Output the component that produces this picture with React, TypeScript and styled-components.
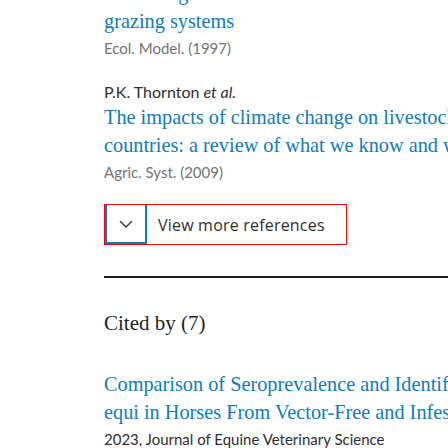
import styled, { createGlobalStyle } from 'styled-components'

const GlobalStyle = createGlobalStyle`
  body {
    margin: 0;
    background: #fff;
  }
`

const Page = styled.div`
  height: 448px;
  overflow: hidden;
  padding-left: 104px;
`

// the page is scrolled, so the first reference starts above the top edge
const RefList = styled.ul<{ $offset?: number }>`
  display: flex;
  flex-direction: column;
  gap: 19px;
  list-style: none;
  margin: ${(p) => p.$offset ?? 0}px 0 0;
  padding: 0;
`

const RefItem = styled.li``

const Authors = styled.div`
  font-family: Lato, sans-serif;
  font-size: 16px;
  line-height: 23px;
  color: #2e2e2e;
  white-space: nowrap;

  em {
    font-style: italic;
  }
`

const Title = styled.a`
  display: block;
  font-family: 'Liberation Serif', serif;
  font-size: 20.3px;
  line-height: 28px;
  color: #0c7dbb;
  text-decoration: none;
  white-space: nowrap;
`

const Source = styled.div<{ $dark?: boolean }>`
  font-family: Lato, sans-serif;
  font-size: 15px;
  line-height: 26px;
  color: ${(p) => (p.$dark ? '#2e2e2e' : '#737373')};
  white-space: nowrap;
`

const ViewMore = styled.button`
  display: flex;
  align-items: stretch;
  width: 243px;
  height: 41px;
  padding: 0;
  margin: 19px 0 0;
  border: 1px solid #ff0000;
  background: #fff;
  cursor: pointer;
`

const IconBox = styled.span`
  display: flex;
  align-items: center;
  justify-content: center;
  width: 38px;
  border: 2px solid #0c7dbb;
  border-top: none;
  color: #2e2e2e;
`

const Label = styled.span`
  display: flex;
  align-items: center;
  padding-left: 11px;
  font-family: 'Open Sans', sans-serif;
  font-size: 16px;
  letter-spacing: 0.2px;
  color: #2e2e2e;
`

const Divider = styled.hr`
  height: 2px;
  margin: 31px 0 0;
  border: none;
  background: #1f1f1f;
`

const Heading = styled.h2`
  margin: 33px 0 0;
  font-family: 'Liberation Serif', serif;
  font-size: 21px;
  font-weight: normal;
  line-height: 24px;
  color: #1f1f1f;
`

const Chevron = () => (
  <svg width="14" height="8" viewBox="0 0 14 8" fill="none">
    <path d="M1 1l6 6 6-6" stroke="currentColor" strokeWidth="1.4" />
  </svg>
)

const App = () => (
  <>
    <GlobalStyle />
    <Page>
      <RefList $offset={-21}>
        <RefItem>
          <Title href="#">
            Modelling the effect of habitat on the cattle tick (Boophilus sp.) in
            <br />
            grazing systems
          </Title>
          <Source>Ecol. Model. (1997)</Source>
        </RefItem>
        <RefItem>
          <Authors>
            P.K. Thornton <em>et al.</em>
          </Authors>
          <Title href="#">
            The impacts of climate change on livestock and livestock systems in developing
            <br />
            countries: a review of what we know and what we need to know
          </Title>
          <Source>Agric. Syst. (2009)</Source>
        </RefItem>
      </RefList>

      <ViewMore>
        <IconBox>
          <Chevron />
        </IconBox>
        <Label>View more references</Label>
      </ViewMore>

      <Divider />

      <Heading>Cited by (7)</Heading>

      <RefList $offset={35}>
        <RefItem>
          <Title href="#">
            Comparison of Seroprevalence and Identification of Theileria equi and Babesia caballi
            <br />
            equi in Horses From Vector-Free and Infested Areas
          </Title>
          <Source $dark>2023, Journal of Equine Veterinary Science</Source>
        </RefItem>
      </RefList>
    </Page>
  </>
)

export default App
